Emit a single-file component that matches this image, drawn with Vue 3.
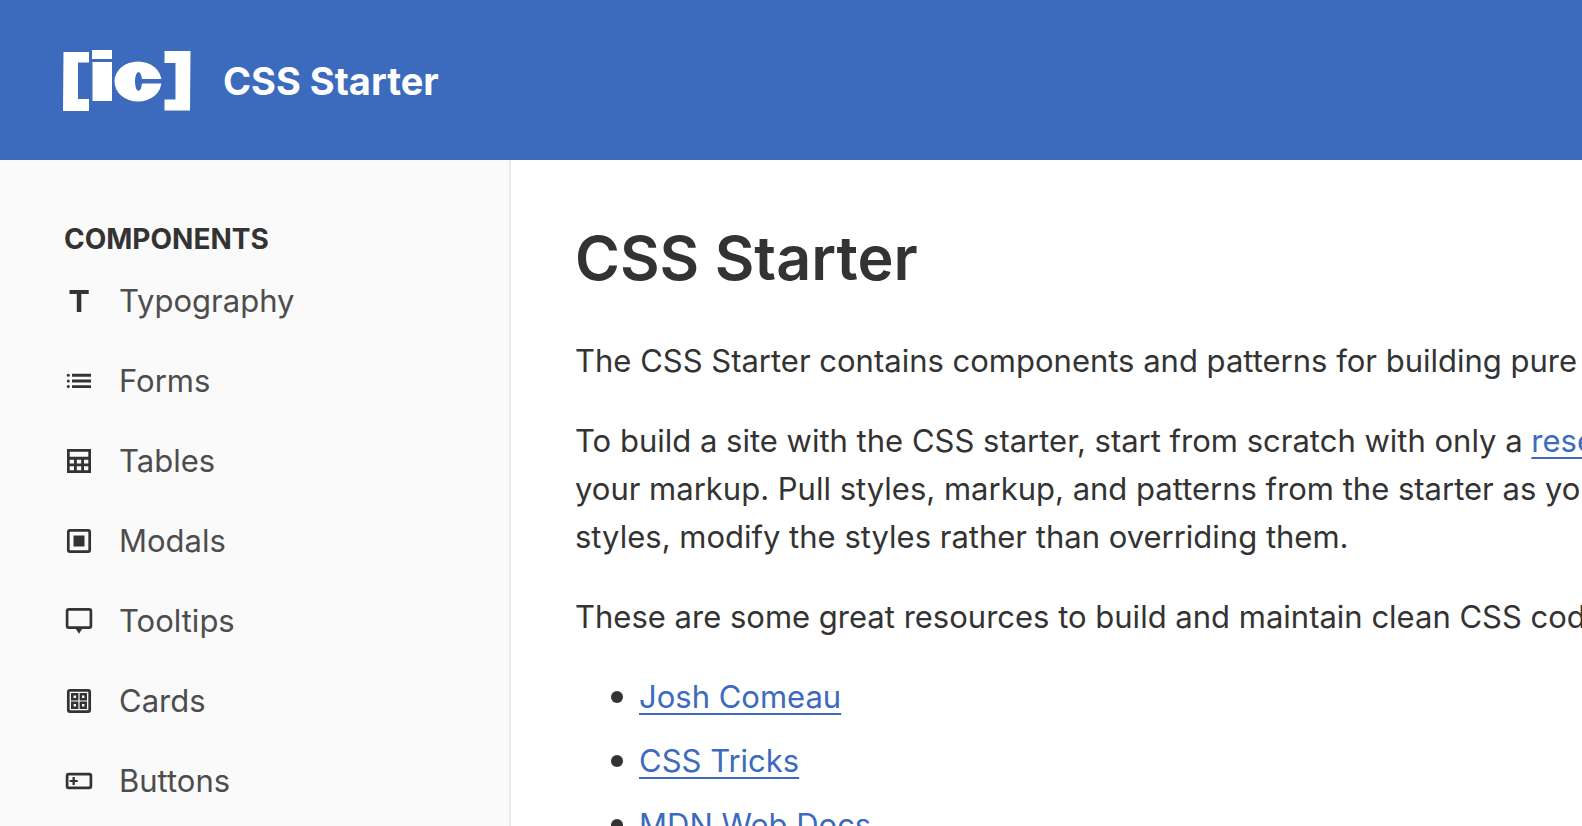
<script setup>
const components = ['Typography', 'Forms', 'Tables', 'Modals', 'Tooltips', 'Cards', 'Buttons']
const resources = ['Josh Comeau', 'CSS Tricks', 'MDN Web Docs']
</script>

<template>
  <div class="page">
    <header class="header">
      <a class="brand" href="#">
        <svg class="logo" viewBox="64 48 128 64" role="img" aria-label="ic">
          <g fill="#fff">
            <path d="M63.5 52H89V62.5H78V99H89V111H63Z" />
            <rect x="92" y="50" width="20" height="9" />
            <rect x="92.5" y="62" width="19.5" height="39" />
            <ellipse cx="138" cy="81.5" rx="23.5" ry="20" />
            <path d="M164.5 51H190.5L190 110.5H164.5V99.5H175.5V63H164.5Z" />
          </g>
          <g fill="#3c6bbd">
            <ellipse cx="138.5" cy="81.5" rx="3.5" ry="9.5" />
            <rect x="138.5" y="79" width="24" height="4.5" />
          </g>
        </svg>
        <span class="brand-name">CSS Starter</span>
      </a>
    </header>

    <div class="body">
      <nav class="sidebar" aria-labelledby="nav-title">
        <h2 id="nav-title" class="nav-title">COMPONENTS</h2>
        <ul class="nav-list">
          <li v-for="name in components" :key="name">
            <a class="nav-link" href="#">
              <svg class="icon" viewBox="0 0 30 30" aria-hidden="true">
                <path v-if="name === 'Typography'" d="M5.5 4H24.7V8H17.3V26H12.8V8H5.5Z" />
                <g v-else-if="name === 'Forms'">
                  <path d="M8 7.8H27V10.7H8ZM8 13.5H27V16.4H8ZM8 19.2H27V22.1H8Z" />
                  <circle cx="4.3" cy="9.3" r="1.5" />
                  <circle cx="4.3" cy="15" r="1.5" />
                  <circle cx="4.3" cy="20.6" r="1.5" />
                </g>
                <path
                  v-else-if="name === 'Tables'"
                  fill-rule="evenodd"
                  d="M3 3H27V27H3ZM5.7 5.7V10.8H24.3V5.7ZM5.7 13.8V17.6H10V13.8ZM12.8 13.8V17.6H17.2V13.8ZM20 13.8V17.6H24.3V13.8ZM5.7 20.2V24.2H10V20.2ZM12.8 20.2V24.2H17.2V20.2ZM20 20.2V24.2H24.3V20.2Z"
                />
                <g v-else-if="name === 'Modals'">
                  <rect class="line" x="4.3" y="4.3" width="21.4" height="21.4" rx="1.6" />
                  <rect x="9.5" y="9.5" width="11" height="11" />
                </g>
                <g v-else-if="name === 'Tooltips'">
                  <rect class="line" x="3.1" y="3.3" width="23.8" height="18.4" rx="1.6" />
                  <path d="M11.3 22H18.7L15 27.8Z" />
                </g>
                <g v-else-if="name === 'Cards'">
                  <rect class="line" x="4.3" y="4.3" width="21.4" height="21.4" rx="1.6" />
                  <path
                    fill-rule="evenodd"
                    d="M7 7H14.4V14.4H7ZM9.6 9.6V12H12V9.6ZM15.600 7H23V14.4H15.600ZM18 9.6V12H20.4V9.6ZM7 15.600H14.4V23H7ZM9.6 18V20.4H12V18ZM15.600 15.600H23V23H15.600ZM18 18V20.4H20.4V18Z"
                  />
                </g>
                <g v-else>
                  <rect class="line" x="3.1" y="8.1" width="23.8" height="13.7" rx="1.6" />
                  <path d="M8.5 11H10.8V13.9H13.7V16.1H10.8V19H8.5V16.1H5.6V13.9H8.5Z" />
                </g>
              </svg>
              <span>{{ name }}</span>
            </a>
          </li>
        </ul>
      </nav>

      <main class="content">
        <h1>CSS Starter</h1>
        <p>The CSS Starter contains components and patterns for building pure</p>
        <p>
          To build a site with the CSS starter, start from scratch with only a <a href="#">reset</a><br />
          your markup. Pull styles, markup, and patterns from the starter as you<br />
          styles, modify the styles rather than overriding them.
        </p>
        <p>These are some great resources to build and maintain clean CSS code:</p>
        <ul class="resources">
          <li v-for="item in resources" :key="item"><a href="#">{{ item }}</a></li>
        </ul>
      </main>
    </div>
  </div>
</template>

<style>
body {
  margin: 0;
  overflow: hidden;
}
</style>

<style scoped>
.page {
  height: 100vh;
  display: flex;
  flex-direction: column;
  overflow: hidden;
  font-family: Inter, "Liberation Sans", sans-serif;
  font-size: 31px;
  line-height: 48px;
  color: #333;
  background: #fff;
}
.header {
  flex: none;
  display: flex;
  padding: 48px 64px;
  background: #3c6bbd;
}
.brand {
  display: flex;
  align-items: center;
  gap: 31px;
  color: #fff;
  text-decoration: none;
}
.logo {
  width: 128px;
  height: 64px;
  overflow: visible;
}
.brand-name {
  padding-top: 2px;
  font-size: 38px;
  font-weight: 700;
}
.body {
  flex: 1;
  min-height: 0;
  display: flex;
}
.sidebar {
  flex: none;
  box-sizing: border-box;
  width: 511px;
  padding: 59px 64px 0;
  border-right: 2px solid #ebebeb;
  background: #fafafa;
}
.nav-title {
  margin: 0 0 2px;
  font-size: 28px;
  line-height: 40px;
  font-weight: 700;
}
.nav-list,
.resources {
  margin: 0;
  padding: 0;
  list-style: none;
}
.nav-link {
  display: flex;
  align-items: center;
  gap: 25px;
  height: 80px;
  color: #4d4d4d;
  text-decoration: none;
}
.icon {
  width: 30px;
  height: 30px;
  fill: #333;
}
.line {
  fill: none;
  stroke: #333;
  stroke-width: 2.7px;
}
.content {
  flex: 1;
  min-width: 0;
  padding: 65px 0 0 64px;
  overflow: hidden;
  white-space: nowrap;
}
h1 {
  margin: 0 0 46px;
  font-size: 61px;
  line-height: 66px;
  font-weight: 600;
}
p {
  margin: 0 0 32px;
}
.content a {
  color: #3c6bbd;
  text-decoration: underline;
  text-decoration-thickness: 2px;
  text-underline-offset: 5px;
}
.resources li {
  display: flex;
  align-items: center;
  gap: 16px;
  margin-bottom: 16px;
  padding-left: 36px;
}
.resources li::before {
  content: "";
  width: 12px;
  height: 12px;
  border-radius: 50%;
  background: #333;
}
</style>
